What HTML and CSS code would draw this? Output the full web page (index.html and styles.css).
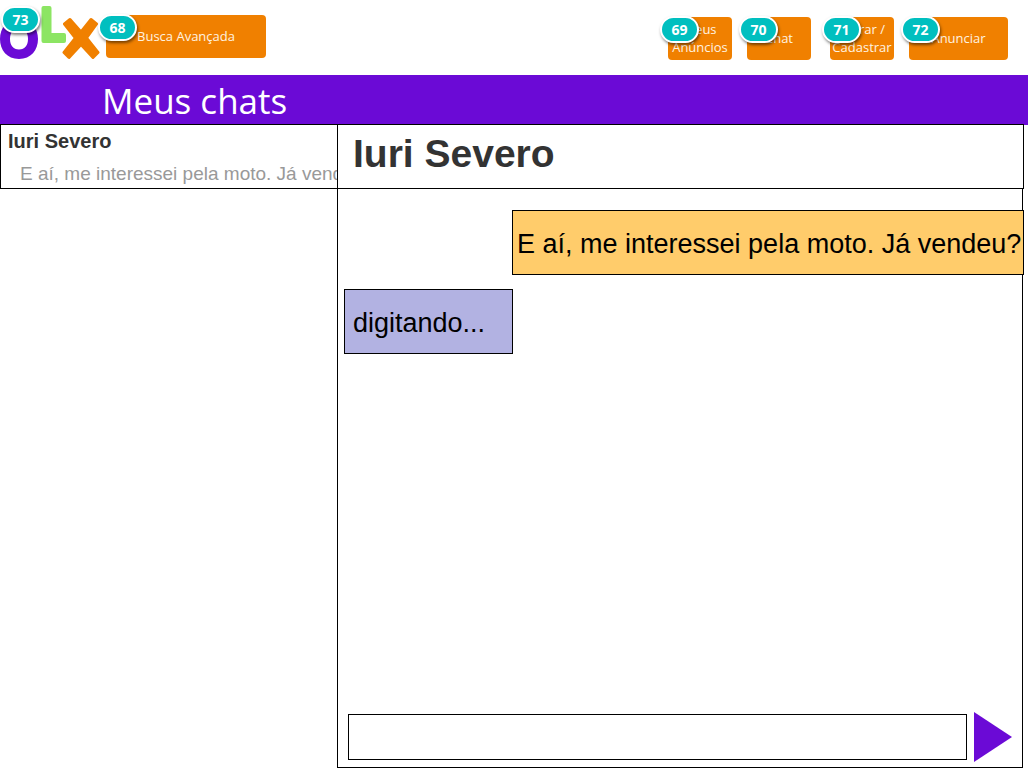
FILE: index.html
```
<!DOCTYPE html>
<html lang="pt-BR">
<head>
<meta charset="utf-8">
<meta name="viewport" content="width=device-width, initial-scale=1">
<title>Meus chats</title>
<link rel="stylesheet" href="styles.css">
</head>
<body>
<header class="topbar">
  <a class="logo" href="#" aria-label="Início">
    <svg class="logo-art" viewBox="0 0 100 60" aria-hidden="true">
      <path fill="#6b0ad6" fill-rule="evenodd" d="M19 19C31 19 38 28 38 39S31 59 19 59S0 50 0 39S7 19 19 19ZM19 28C13 28 10 33 10 39S13 49.500 19 49.500S28 45 28 39S25 28 19 28Z"/>
      <path fill="#8ce563" d="M43.500 6H49.500Q51.500 6 51.500 8V33H64Q66 33 66 35V41Q66 43 64 43H43.500Q41.500 43 41.500 41V8Q41.500 6 43.500 6Z"/>
      <path fill="#f08000" stroke="#f08000" stroke-width="3" stroke-linejoin="round" d="M70 19.500L81 32L91 19.500L96.500 24L86.500 38L98 52.500L93 57.500L81 44.500L69 57.500L64 52.500L75.500 38L64.500 24Z"/>
    </svg>
    <span class="badge badge-logo">73</span>
  </a>
  <button class="btn btn-search" type="button">Busca Avançada<span class="badge">68</span></button>
  <nav class="actions">
    <div class="action-pair">
      <button class="btn" type="button">Meus Anúncios<span class="badge">69</span></button>
      <button class="btn" type="button">Chat<span class="badge">70</span></button>
    </div>
    <div class="action-pair">
      <button class="btn" type="button">Entrar / Cadastrar<span class="badge">71</span></button>
      <button class="btn btn-wide" type="button">Anunciar<span class="badge">72</span></button>
    </div>
  </nav>
</header>
<h1 class="page-title">Meus chats</h1>
<main class="chats">
  <aside class="chat-list">
    <a class="chat-item" href="#">
      <strong class="chat-name">Iuri Severo</strong>
      <span class="chat-preview">E aí, me interessei pela moto. Já vendeu?</span>
    </a>
  </aside>
  <section class="conversation">
    <h2 class="contact">Iuri Severo</h2>
    <div class="messages">
      <p class="message message-out">E aí, me interessei pela moto. Já vendeu?</p>
      <p class="message message-in">digitando...</p>
    </div>
    <form class="composer">
      <input class="composer-text" type="text" aria-label="Mensagem">
      <button class="send" type="button" aria-label="Enviar">
        <svg class="send-icon" viewBox="0 0 38 50" aria-hidden="true"><path d="M0 0L38 25L0 50Z" fill="#6b0ad6"/></svg>
      </button>
    </form>
  </section>
</main>
</body>
</html>
```
FILE: styles.css
```
* {
  box-sizing: border-box;
}

body {
  margin: 0;
  min-height: 100vh;
  display: flex;
  flex-direction: column;
  background: #fff;
  color: #000;
  font-family: "Liberation Sans", Arial, sans-serif;
}

.topbar {
  display: flex;
  align-items: flex-start;
  height: 75px;
  padding-right: 20px;
}

.logo {
  position: relative;
  width: 106px;
  text-decoration: none;
}

.logo-art {
  display: block;
  width: 100px;
  height: 60px;
}

.btn {
  position: relative;
  width: 64px;
  height: 43px;
  padding: 0 0 2px;
  border: 0;
  border-radius: 4px;
  background: #f08000;
  color: #fff3e0;
  font: 13px/18px "Open Sans", sans-serif;
}

.btn-search {
  width: 160px;
  margin-top: 15px;
}

.btn-wide {
  width: 99px;
}

.badge {
  position: absolute;
  top: -1px;
  left: -8px;
  width: 39px;
  height: 27px;
  border: 2px solid #fff;
  border-radius: 14px;
  background: #00bfbf;
  box-shadow: 1px 2px 3px rgba(0, 0, 0, 0.5);
  color: #fff;
  font: bold 14px/24px "Open Sans", sans-serif;
  text-align: center;
}

.badge-logo {
  top: 6px;
  left: 1px;
}

.actions {
  display: flex;
  gap: 19px;
  margin: 17px 0 0 auto;
}

.action-pair {
  display: flex;
  gap: 15px;
}

.page-title {
  margin: 0;
  height: 50px;
  padding-left: 102px;
  background: #6b0ad6;
  color: #fff;
  font: 35px/52px "Open Sans", sans-serif;
}

.chats {
  flex: 1;
  display: grid;
  grid-template-columns: 337px 1fr;
  margin: -1px 5px 15px 0;
}

.chat-item {
  display: block;
  height: 65px;
  padding: 5px 0 0 7px;
  overflow: hidden;
  border: solid #000;
  border-width: 1px 0 1px 1px;
  color: #333;
  text-decoration: none;
  white-space: nowrap;
}

.chat-name {
  display: block;
  font-size: 20px;
  line-height: 22px;
}

.chat-preview {
  display: block;
  padding: 10px 0 0 12px;
  color: #999;
  font-size: 19px;
  line-height: 23px;
}

.conversation {
  display: flex;
  flex-direction: column;
  border: solid #000;
  border-width: 0 1px 1px;
}

.contact {
  position: relative;
  height: 65px;
  margin: 0 -2px 0 -1px;
  padding-left: 15px;
  border: 1px solid #000;
  background: #fff;
  color: #333;
  font-size: 39px;
  line-height: 57px;
}

.messages {
  flex: 1;
  display: flex;
  flex-direction: column;
  gap: 14px;
  padding: 21px 0 0 6px;
}

.message {
  height: 65px;
  margin: 0;
  border: 1px solid #000;
  font-size: 27px;
  line-height: 66px;
  white-space: nowrap;
}

.message-out {
  align-self: flex-end;
  width: 512px;
  margin-right: -2px;
  padding-left: 4px;
  background: #ffcc6b;
}

.message-in {
  align-self: flex-start;
  width: 169px;
  padding-left: 8px;
  background: #b2b2e2;
}

.composer {
  display: flex;
  align-items: center;
  gap: 7px;
  padding: 0 10px 5px;
}

.composer-text {
  flex: 1;
  height: 46px;
  min-width: 0;
  padding: 0 8px;
  border: 1px solid #000;
  background: #fff;
  font: 27px "Liberation Sans", Arial, sans-serif;
}

.send {
  padding: 0;
  border: 0;
  background: none;
}

.send-icon {
  display: block;
  width: 38px;
  height: 50px;
}
```
